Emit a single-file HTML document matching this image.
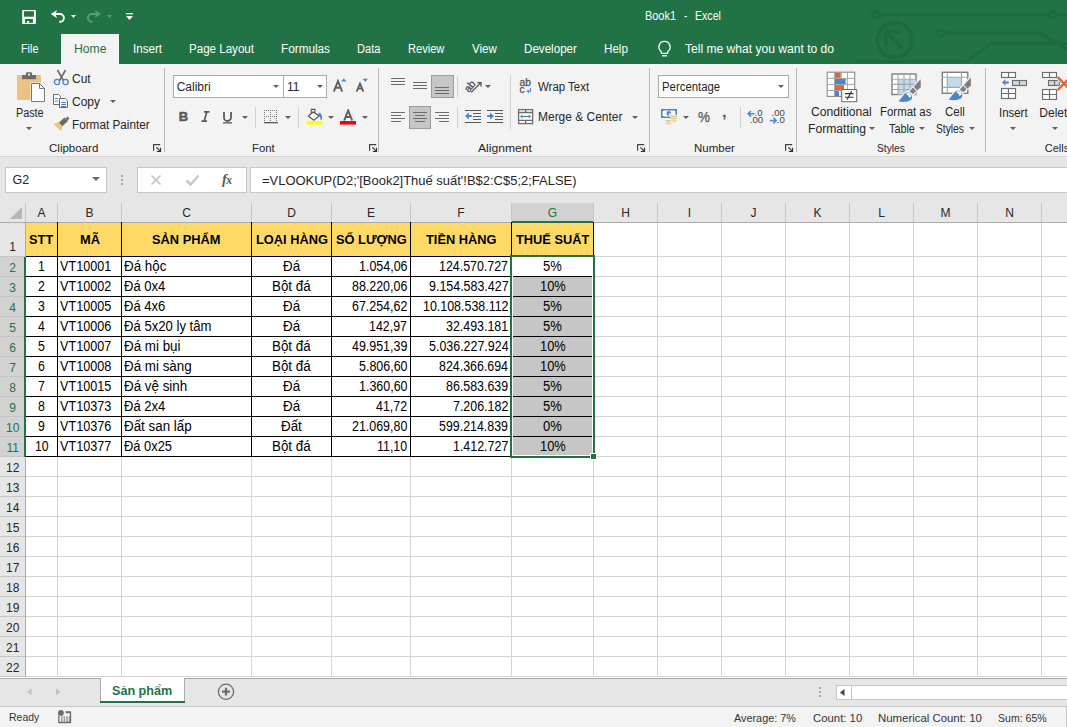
<!DOCTYPE html>
<html><head><meta charset="utf-8"><style>
html,body{margin:0;padding:0;width:1067px;height:727px;overflow:hidden;background:#fff;position:relative;font-family:"Liberation Sans", sans-serif;}
.t{position:absolute;white-space:nowrap;line-height:1;}
</style></head><body>
<div style="position:absolute;left:0px;top:0px;width:1067px;height:64px;background:#217346"></div>
<svg style="position:absolute;left:850px;top:0px;" width="217" height="64" viewBox="0 0 217 64">
<g stroke="#1e6a3f" stroke-width="3.2" fill="none">
<path d="M29 14.6 H199 M206.8 14.6 H217"/>
<circle cx="25.4" cy="14.6" r="3.2" stroke-width="2.6"/>
<circle cx="202.8" cy="14.6" r="3.2" stroke-width="2.6"/>
<circle cx="44.7" cy="40" r="17.4" stroke-width="3.8"/>
<path d="M37.5 33.5 L52 48 M35.6 46.5 V31.5 H51" stroke-width="4.2"/>
<circle cx="90.9" cy="33.2" r="3.2" stroke-width="2.6"/>
<path d="M94.5 33.2 H190.2 L217 48.8"/>
<path d="M5 61.5 H115.9 L141.3 43.3 H217"/>
</g></svg>
<svg style="position:absolute;left:21px;top:9px;" width="16" height="16" viewBox="0 0 16 16"><rect x="1.2" y="0.9" width="13.7" height="14" rx="0.6" fill="#fff"/><rect x="3" y="2.2" width="9.9" height="5.5" fill="#217346"/><rect x="4" y="10" width="7.9" height="3.8" fill="#217346"/><rect x="6" y="12" width="2.1" height="1.8" fill="#fff"/></svg>
<svg style="position:absolute;left:50px;top:9px;" width="17" height="16" viewBox="0 0 17 16"><path d="M0.8 5.1 L7.1 1 L5.4 5.1 L7.1 9.2 Z" fill="#fff"/><path d="M5 5.1 H10 A3.85 3.85 0 0 1 10 12.8 H9.2" fill="none" stroke="#fff" stroke-width="2"/></svg>
<svg style="position:absolute;left:71px;top:15px;" width="5" height="3" viewBox="0 0 5 3"><path d="M0 0 H5 L2.5 3 Z" fill="#fff"/></svg>
<svg style="position:absolute;left:86px;top:9px;" width="17" height="16" viewBox="0 0 17 16"><g transform="translate(15.8,0) scale(-1,1)"><path d="M0.8 5.1 L7.1 1 L5.4 5.1 L7.1 9.2 Z" fill="#5d9a77"/><path d="M5 5.1 H10 A3.85 3.85 0 0 1 10 12.8 H9.2" fill="none" stroke="#5d9a77" stroke-width="2"/></g></svg>
<svg style="position:absolute;left:107px;top:15px;" width="5" height="3" viewBox="0 0 5 3"><path d="M0 0 H5 L2.5 3 Z" fill="#5d9a77"/></svg>
<svg style="position:absolute;left:126px;top:12px;" width="7" height="9" viewBox="0 0 7 9"><rect x="0" y="1" width="7" height="1.3" fill="#fff"/><path d="M0 4 H7 L3.5 8 Z" fill="#fff"/></svg>
<div class="t" style="left:644.60px;top:9.84px;font-size:12px;color:#fff;font-weight:normal;transform-origin:0 0;transform:scaleX(0.9112);">Book1</div>
<div class="t" style="left:683.80px;top:9.84px;font-size:12px;color:#fff;font-weight:normal;transform-origin:0 0;transform:scaleX(0.8258);">-</div>
<div class="t" style="left:694.70px;top:9.84px;font-size:12px;color:#fff;font-weight:normal;transform-origin:0 0;transform:scaleX(0.8828);">Excel</div>
<div style="position:absolute;left:61px;top:34px;width:58px;height:30px;background:#f3f3f3"></div>
<div class="t" style="left:20.70px;top:42.74px;font-size:12px;color:#fff;font-weight:normal;transform-origin:0 0;transform:scaleX(0.9001);">File</div>
<div class="t" style="left:73.60px;top:42.74px;font-size:12px;color:#217346;font-weight:normal;transform-origin:0 0;transform:scaleX(1.0182);">Home</div>
<div class="t" style="left:133.00px;top:42.74px;font-size:12px;color:#fff;font-weight:normal;transform-origin:0 0;transform:scaleX(0.9663);">Insert</div>
<div class="t" style="left:189.00px;top:42.74px;font-size:12px;color:#fff;font-weight:normal;transform-origin:0 0;transform:scaleX(0.9645);">Page Layout</div>
<div class="t" style="left:281.00px;top:42.74px;font-size:12px;color:#fff;font-weight:normal;transform-origin:0 0;transform:scaleX(0.9797);">Formulas</div>
<div class="t" style="left:357.40px;top:42.74px;font-size:12px;color:#fff;font-weight:normal;transform-origin:0 0;transform:scaleX(0.9229);">Data</div>
<div class="t" style="left:408.30px;top:42.74px;font-size:12px;color:#fff;font-weight:normal;transform-origin:0 0;transform:scaleX(0.9217);">Review</div>
<div class="t" style="left:472.10px;top:42.74px;font-size:12px;color:#fff;font-weight:normal;transform-origin:0 0;transform:scaleX(0.9603);">View</div>
<div class="t" style="left:524.10px;top:42.74px;font-size:12px;color:#fff;font-weight:normal;transform-origin:0 0;transform:scaleX(0.9672);">Developer</div>
<div class="t" style="left:604.30px;top:42.74px;font-size:12px;color:#fff;font-weight:normal;transform-origin:0 0;transform:scaleX(0.9682);">Help</div>
<svg style="position:absolute;left:657px;top:40px;" width="15" height="18" viewBox="0 0 15 18"><path d="M7.5 1.3 a5.6 5.6 0 0 0 -3.2 10.2 V13.3 H10.7 V11.5 A5.6 5.6 0 0 0 7.5 1.3 Z" fill="none" stroke="#fff" stroke-width="1.3"/><path d="M5 15.8 H10" stroke="#fff" stroke-width="1.3"/></svg>
<div class="t" style="left:684.90px;top:42.74px;font-size:12px;color:#fff;font-weight:normal;transform-origin:0 0;transform:scaleX(1.0062);">Tell me what you want to do</div>
<div style="position:absolute;left:0px;top:64px;width:1067px;height:92px;background:#f3f3f3"></div>
<div style="position:absolute;left:0px;top:156px;width:1067px;height:1px;background:#d5d5d5"></div>
<div style="position:absolute;left:0px;top:157px;width:1067px;height:46px;background:#e6e6e6"></div>
<div style="position:absolute;left:164px;top:68px;width:1px;height:84px;background:#b8b8b8"></div>
<div style="position:absolute;left:378px;top:68px;width:1px;height:84px;background:#b8b8b8"></div>
<div style="position:absolute;left:649px;top:68px;width:1px;height:84px;background:#b8b8b8"></div>
<div style="position:absolute;left:796px;top:68px;width:1px;height:84px;background:#b8b8b8"></div>
<div style="position:absolute;left:985px;top:68px;width:1px;height:84px;background:#b8b8b8"></div>
<svg style="position:absolute;left:15px;top:71px;" width="32" height="33" viewBox="0 0 32 33">
<rect x="2" y="4" width="24" height="25" rx="1.2" fill="#eac282"/>
<rect x="7" y="4" width="14" height="4.2" fill="#6b6b6b"/>
<rect x="11" y="1.3" width="6" height="3.5" rx="1" fill="#6b6b6b"/>
<circle cx="14" cy="3.6" r="1.1" fill="#f3f3f3"/>
<path d="M15.5 11.5 H25.5 L30.5 16.5 V31.5 H15.5 Z" fill="#f3f3f3"/>
<path d="M16.5 12.5 H24.5 L29.5 17.5 V30.5 H16.5 Z" fill="#fff" stroke="#777" stroke-width="1"/>
<path d="M24.5 12.5 V17.5 H29.5" fill="none" stroke="#777" stroke-width="1"/>
</svg>
<div class="t" style="left:15.60px;top:107.24px;font-size:12px;color:#262626;font-weight:normal;transform-origin:0 0;transform:scaleX(0.8995);">Paste</div>
<svg style="position:absolute;left:25.8px;top:126.80000000000001px;" width="6" height="3.0" viewBox="0 0 6 3.0"><path d="M0 0 H6 L3.0 3.0 Z" fill="#5f5f5f"/></svg>
<svg style="position:absolute;left:53px;top:69px;" width="17" height="17" viewBox="0 0 17 17">
<path d="M4.5 1 L10.5 11.5 M12.5 1 L6.5 11.5" stroke="#6b6b6b" stroke-width="1.6" fill="none"/>
<circle cx="4" cy="13" r="2.6" fill="none" stroke="#4a86c8" stroke-width="1.3"/>
<circle cx="12.6" cy="13" r="2.6" fill="none" stroke="#4a86c8" stroke-width="1.3"/>
</svg>
<div class="t" style="left:72.40px;top:73.14px;font-size:12px;color:#262626;font-weight:normal;transform-origin:0 0;transform:scaleX(0.9961);">Cut</div>
<svg style="position:absolute;left:53px;top:94px;" width="16" height="15" viewBox="0 0 16 15">
<path d="M0.5 0.5 H5.5 L7.5 2.5 V10.5 H0.5 Z" fill="#fff" stroke="#6b6b6b" stroke-width="1"/>
<rect x="2" y="4" width="3" height="1" fill="#4a86c8"/><rect x="2" y="6.5" width="3" height="1" fill="#4a86c8"/>
<path d="M6.5 4.5 H12 L14.5 7 V13.5 H6.5 Z" fill="#fff" stroke="#6b6b6b" stroke-width="1"/>
<rect x="8" y="8" width="5" height="1" fill="#4a86c8"/><rect x="8" y="10" width="5" height="1" fill="#4a86c8"/><rect x="8" y="12" width="5" height="1" fill="#4a86c8"/>
</svg>
<div class="t" style="left:72.40px;top:96.24px;font-size:12px;color:#262626;font-weight:normal;transform-origin:0 0;transform:scaleX(0.9997);">Copy</div>
<svg style="position:absolute;left:109.7px;top:100.0px;" width="6" height="3.0" viewBox="0 0 6 3.0"><path d="M0 0 H6 L3.0 3.0 Z" fill="#5f5f5f"/></svg>
<svg style="position:absolute;left:53px;top:116px;" width="17" height="16" viewBox="0 0 17 16">
<path d="M0.5 8 L6.5 6 L10 9.5 L8 15 Z" fill="#eac282"/>
<path d="M6 6.5 L11.5 1.5 L15 5 L9.5 10 Z" fill="#6b6b6b"/>
<path d="M12.5 2.5 L14.5 0.5 L16.5 2.5 L14.5 4.5 Z" fill="#6b6b6b"/>
</svg>
<div class="t" style="left:72.40px;top:118.84px;font-size:12px;color:#262626;font-weight:normal;transform-origin:0 0;transform:scaleX(0.9779);">Format Painter</div>
<div class="t" style="left:48.70px;top:143.19px;font-size:11px;color:#262626;font-weight:normal;transform-origin:0 0;transform:scaleX(1.0472);">Clipboard</div>
<svg style="position:absolute;left:153px;top:144px;" width="9" height="9" viewBox="0 0 9 9"><path d="M0.6 6.8 V0.6 H7.2" fill="none" stroke="#444" stroke-width="1.2"/><path d="M3.4 3.3 L7.4 7.3 M7.5 3.8 V7.5 H3.8" fill="none" stroke="#333" stroke-width="1.2"/></svg>
<div style="position:absolute;left:173px;top:75px;width:154px;height:23px;background:#fff;border:1px solid #ababab;box-sizing:border-box"></div>
<div style="position:absolute;left:283px;top:76px;width:1px;height:21px;background:#ababab"></div>
<div class="t" style="left:176.70px;top:80.84px;font-size:12px;color:#262626;font-weight:normal;transform-origin:0 0;transform:scaleX(1.0000);">Calibri</div>
<svg style="position:absolute;left:273.4px;top:84.9px;" width="6" height="3.0" viewBox="0 0 6 3.0"><path d="M0 0 H6 L3.0 3.0 Z" fill="#5f5f5f"/></svg>
<div class="t" style="left:287.00px;top:80.84px;font-size:12px;color:#262626;font-weight:normal;transform-origin:0 0;transform:scaleX(1.0000);">11</div>
<svg style="position:absolute;left:316.5px;top:84.9px;" width="6" height="3.0" viewBox="0 0 6 3.0"><path d="M0 0 H6 L3.0 3.0 Z" fill="#5f5f5f"/></svg>
<svg style="position:absolute;left:332px;top:78px;" width="16" height="15" viewBox="0 0 16 15"><path d="M1.8 13.6 L6 3 L10.2 13.6 M3.4 9.8 H8.6" fill="none" stroke="#5f5f5f" stroke-width="1.9"/><path d="M9 3.6 L11.8 0.6 L14.6 3.6 Z" fill="#4a86c8"/></svg>
<svg style="position:absolute;left:355px;top:78px;" width="15" height="15" viewBox="0 0 15 15"><path d="M1.6 13.6 L5 5.6 L8.4 13.6 M2.9 10.6 H7.1" fill="none" stroke="#5f5f5f" stroke-width="1.8"/><path d="M7.6 0.8 H13 L10.3 3.8 Z" fill="#4a86c8"/></svg>
<svg style="position:absolute;left:178px;top:110px;" width="11" height="13" viewBox="0 0 11 13"><text x="0.8" y="11" font-family="Liberation Sans" font-weight="bold" font-size="13" fill="#595959" stroke="#595959" stroke-width="0.5">B</text></svg>
<svg style="position:absolute;left:201px;top:111px;" width="9" height="11" viewBox="0 0 9 11"><path d="M3 0.8 H8.5 M0.5 10.2 H6 M5.8 0.8 L3.2 10.2" stroke="#595959" stroke-width="1.7" fill="none"/></svg>
<svg style="position:absolute;left:222px;top:111px;" width="11" height="13" viewBox="0 0 11 13"><path d="M2 1 V6.5 a3.5 3.5 0 0 0 7 0 V1" fill="none" stroke="#595959" stroke-width="1.8"/><rect x="1" y="11.2" width="9" height="1.3" fill="#595959"/></svg>
<svg style="position:absolute;left:241.5px;top:116.0px;" width="6" height="3.0" viewBox="0 0 6 3.0"><path d="M0 0 H6 L3.0 3.0 Z" fill="#5f5f5f"/></svg>
<div style="position:absolute;left:255px;top:107px;width:1px;height:21px;background:#d2d2d2"></div>
<svg style="position:absolute;left:264px;top:110px;" width="14" height="14" viewBox="0 0 14 14"><g fill="#7a7a7a"><rect x="0" y="0" width="1" height="1"/><rect x="2" y="0" width="1" height="1"/><rect x="4" y="0" width="1" height="1"/><rect x="6" y="0" width="1" height="1"/><rect x="8" y="0" width="1" height="1"/><rect x="10" y="0" width="1" height="1"/><rect x="12" y="0" width="1" height="1"/><rect x="0" y="6" width="1" height="1"/><rect x="2" y="6" width="1" height="1"/><rect x="4" y="6" width="1" height="1"/><rect x="6" y="6" width="1" height="1"/><rect x="8" y="6" width="1" height="1"/><rect x="10" y="6" width="1" height="1"/><rect x="12" y="6" width="1" height="1"/><rect x="0" y="0" width="1" height="1"/><rect x="0" y="2" width="1" height="1"/><rect x="0" y="4" width="1" height="1"/><rect x="0" y="6" width="1" height="1"/><rect x="0" y="8" width="1" height="1"/><rect x="0" y="10" width="1" height="1"/><rect x="6" y="0" width="1" height="1"/><rect x="6" y="2" width="1" height="1"/><rect x="6" y="4" width="1" height="1"/><rect x="6" y="6" width="1" height="1"/><rect x="6" y="8" width="1" height="1"/><rect x="6" y="10" width="1" height="1"/><rect x="12" y="0" width="1" height="1"/><rect x="12" y="2" width="1" height="1"/><rect x="12" y="4" width="1" height="1"/><rect x="12" y="6" width="1" height="1"/><rect x="12" y="8" width="1" height="1"/><rect x="12" y="10" width="1" height="1"/></g><rect x="0" y="12" width="14" height="1.3" fill="#595959"/></svg>
<svg style="position:absolute;left:284.5px;top:116.0px;" width="6" height="3.0" viewBox="0 0 6 3.0"><path d="M0 0 H6 L3.0 3.0 Z" fill="#5f5f5f"/></svg>
<div style="position:absolute;left:298px;top:107px;width:1px;height:21px;background:#d2d2d2"></div>
<svg style="position:absolute;left:306px;top:108px;" width="18" height="17" viewBox="0 0 18 17"><path d="M5.2 6.4 V1.4 H8.9 V5.4" fill="none" stroke="#555" stroke-width="1.1"/><path d="M2.4 8.3 L6.9 4.1 L13.4 7.9 L7.9 12.3 Z" fill="#fff" stroke="#555" stroke-width="1.2" stroke-linejoin="miter"/><path d="M12.8 4.6 Q16.8 5.6 15.8 11.6 L14.3 11.4 Q14.8 8.2 12.2 7.2 Z" fill="#4a86c8"/><rect x="0.5" y="13" width="16" height="3.6" fill="#ffff00"/></svg>
<svg style="position:absolute;left:327.5px;top:116.0px;" width="6" height="3.0" viewBox="0 0 6 3.0"><path d="M0 0 H6 L3.0 3.0 Z" fill="#5f5f5f"/></svg>
<svg style="position:absolute;left:340px;top:109px;" width="17" height="16" viewBox="0 0 17 16"><path d="M4.2 11.5 L8.2 1.5 L12.2 11.5 M5.6 8 H10.8" fill="none" stroke="#5f5f5f" stroke-width="2"/><rect x="0" y="12" width="16" height="3.6" fill="#ff0000"/></svg>
<svg style="position:absolute;left:361.8px;top:115.8px;" width="6" height="3.0" viewBox="0 0 6 3.0"><path d="M0 0 H6 L3.0 3.0 Z" fill="#5f5f5f"/></svg>
<div class="t" style="left:251.80px;top:143.19px;font-size:11px;color:#262626;font-weight:normal;transform-origin:0 0;transform:scaleX(1.0313);">Font</div>
<svg style="position:absolute;left:369px;top:144px;" width="9" height="9" viewBox="0 0 9 9"><path d="M0.6 6.8 V0.6 H7.2" fill="none" stroke="#444" stroke-width="1.2"/><path d="M3.4 3.3 L7.4 7.3 M7.5 3.8 V7.5 H3.8" fill="none" stroke="#333" stroke-width="1.2"/></svg>
<div style="position:absolute;left:391px;top:78px;width:14px;height:1px;background:#6b6b6b"></div>
<div style="position:absolute;left:391px;top:81px;width:14px;height:1px;background:#6b6b6b"></div>
<div style="position:absolute;left:391px;top:84px;width:14px;height:1px;background:#6b6b6b"></div>
<div style="position:absolute;left:413px;top:82px;width:14px;height:1px;background:#6b6b6b"></div>
<div style="position:absolute;left:413px;top:85px;width:14px;height:1px;background:#6b6b6b"></div>
<div style="position:absolute;left:413px;top:88px;width:14px;height:1px;background:#6b6b6b"></div>
<div style="position:absolute;left:431px;top:75px;width:23px;height:23px;background:#c6c6c6;border:1px solid #9c9c9c;box-sizing:border-box"></div>
<div style="position:absolute;left:435px;top:87px;width:14px;height:1px;background:#6b6b6b"></div>
<div style="position:absolute;left:435px;top:90px;width:14px;height:1px;background:#6b6b6b"></div>
<div style="position:absolute;left:435px;top:93px;width:14px;height:1px;background:#6b6b6b"></div>
<div style="position:absolute;left:457px;top:76px;width:1px;height:21px;background:#d2d2d2"></div>
<svg style="position:absolute;left:463px;top:76px;" width="20" height="18" viewBox="0 0 20 18"><text x="2" y="15" font-family="Liberation Sans" font-size="10.5" fill="#555" stroke="#555" stroke-width="0.35" transform="rotate(-52 6 12)">ab</text><path d="M8.2 16.4 L17.8 6.8" stroke="#555" stroke-width="1.3"/><path d="M14.2 6.6 H18 V10.4" fill="none" stroke="#555" stroke-width="1.3"/></svg>
<svg style="position:absolute;left:484.5px;top:84.5px;" width="6" height="3.0" viewBox="0 0 6 3.0"><path d="M0 0 H6 L3.0 3.0 Z" fill="#5f5f5f"/></svg>
<div style="position:absolute;left:391px;top:112px;width:14px;height:1px;background:#6b6b6b"></div>
<div style="position:absolute;left:391px;top:115px;width:10px;height:1px;background:#6b6b6b"></div>
<div style="position:absolute;left:391px;top:118px;width:14px;height:1px;background:#6b6b6b"></div>
<div style="position:absolute;left:391px;top:121px;width:10px;height:1px;background:#6b6b6b"></div>
<div style="position:absolute;left:409px;top:106px;width:22px;height:23px;background:#c6c6c6;border:1px solid #9c9c9c;box-sizing:border-box"></div>
<div style="position:absolute;left:413.0px;top:112px;width:14px;height:1px;background:#6b6b6b"></div>
<div style="position:absolute;left:415.0px;top:115px;width:10px;height:1px;background:#6b6b6b"></div>
<div style="position:absolute;left:413.0px;top:118px;width:14px;height:1px;background:#6b6b6b"></div>
<div style="position:absolute;left:415.0px;top:121px;width:10px;height:1px;background:#6b6b6b"></div>
<div style="position:absolute;left:435px;top:112px;width:14px;height:1px;background:#6b6b6b"></div>
<div style="position:absolute;left:439px;top:115px;width:10px;height:1px;background:#6b6b6b"></div>
<div style="position:absolute;left:435px;top:118px;width:14px;height:1px;background:#6b6b6b"></div>
<div style="position:absolute;left:439px;top:121px;width:10px;height:1px;background:#6b6b6b"></div>
<div style="position:absolute;left:457px;top:107px;width:1px;height:21px;background:#d2d2d2"></div>
<svg style="position:absolute;left:465px;top:110px;" width="16" height="13" viewBox="0 0 16 13"><g fill="#595959"><rect x="0" y="0" width="16" height="1"/><rect x="8" y="3" width="8" height="1"/><rect x="8" y="6" width="8" height="1"/><rect x="8" y="9" width="8" height="1"/><rect x="0" y="12" width="16" height="1"/></g><path d="M0 6 L3.9 2.6 V5 H6.8 V7 H3.9 V9.4 Z" fill="#4a86c8"/></svg>
<svg style="position:absolute;left:487px;top:110px;" width="16" height="13" viewBox="0 0 16 13"><g fill="#595959"><rect x="0" y="0" width="16" height="1"/><rect x="8" y="3" width="8" height="1"/><rect x="8" y="6" width="8" height="1"/><rect x="8" y="9" width="8" height="1"/><rect x="0" y="12" width="16" height="1"/></g><path d="M7 6 L3.1 2.6 V5 H0.2 V7 H3.1 V9.4 Z" fill="#4a86c8"/></svg>
<div style="position:absolute;left:510px;top:75px;width:1px;height:54px;background:#d2d2d2"></div>
<svg style="position:absolute;left:519px;top:78px;" width="15" height="16" viewBox="0 0 15 16"><text x="0.6" y="8" font-family="Liberation Sans" font-size="10" fill="#555" stroke="#555" stroke-width="0.3" textLength="11.5" lengthAdjust="spacingAndGlyphs">ab</text><text x="0.6" y="14.6" font-family="Liberation Sans" font-size="10" fill="#555" stroke="#555" stroke-width="0.3">c</text><path d="M11.5 10 V13.2 H8.6" fill="none" stroke="#4a86c8" stroke-width="1.1"/><path d="M10 11.8 L8.3 13.2 L10 14.6" fill="none" stroke="#4a86c8" stroke-width="1.1"/></svg>
<div class="t" style="left:537.50px;top:80.84px;font-size:12px;color:#262626;font-weight:normal;transform-origin:0 0;transform:scaleX(0.9537);">Wrap Text</div>
<svg style="position:absolute;left:517px;top:108px;" width="17" height="17" viewBox="0 0 17 17"><rect x="1.6" y="1.6" width="14" height="14" fill="#fff" stroke="#6b6b6b" stroke-width="1.3"/><path d="M1.6 4.5 H15.6 M1.6 12.4 H15.6 M8.6 1.6 V4.5 M8.6 12.4 V15.6" stroke="#6b6b6b" stroke-width="1.3"/><path d="M4.6 8.5 H12.6" stroke="#4a86c8" stroke-width="1.3"/><path d="M3 8.5 L5.4 6.6 V10.4 Z M14.2 8.5 L11.8 6.6 V10.4 Z" fill="#4a86c8"/></svg>
<div class="t" style="left:537.50px;top:111.44px;font-size:12px;color:#262626;font-weight:normal;transform-origin:0 0;transform:scaleX(0.9975);">Merge &amp; Center</div>
<svg style="position:absolute;left:631.5px;top:116.3px;" width="6" height="3.0" viewBox="0 0 6 3.0"><path d="M0 0 H6 L3.0 3.0 Z" fill="#5f5f5f"/></svg>
<div class="t" style="left:478.30px;top:143.19px;font-size:11px;color:#262626;font-weight:normal;transform-origin:0 0;transform:scaleX(1.1039);">Alignment</div>
<svg style="position:absolute;left:637px;top:144px;" width="9" height="9" viewBox="0 0 9 9"><path d="M0.6 6.8 V0.6 H7.2" fill="none" stroke="#444" stroke-width="1.2"/><path d="M3.4 3.3 L7.4 7.3 M7.5 3.8 V7.5 H3.8" fill="none" stroke="#333" stroke-width="1.2"/></svg>
<div style="position:absolute;left:658px;top:75px;width:131px;height:23px;background:#fff;border:1px solid #ababab;box-sizing:border-box"></div>
<div class="t" style="left:661.60px;top:80.84px;font-size:12px;color:#262626;font-weight:normal;transform-origin:0 0;transform:scaleX(0.9482);">Percentage</div>
<svg style="position:absolute;left:778.0px;top:84.9px;" width="6" height="3.0" viewBox="0 0 6 3.0"><path d="M0 0 H6 L3.0 3.0 Z" fill="#5f5f5f"/></svg>
<svg style="position:absolute;left:660px;top:108px;" width="19" height="18" viewBox="0 0 19 18"><rect x="1" y="1" width="16" height="9" fill="#4a86c8"/><path d="M3.6 2.6 H14.4 L15.4 3.6 V7.4 L14.4 8.4 H3.6 L2.6 7.4 V3.6 Z" fill="#fff"/><circle cx="8.8" cy="5.4" r="2.3" fill="#4a86c8"/><path d="M8.8 5.4 L11.2 5.4 A2.4 2.4 0 0 1 8.8 7.8 Z" fill="#fff"/><g fill="#eac282" stroke="#f3f3f3" stroke-width="0.9"><ellipse cx="13.6" cy="12.8" rx="3.6" ry="1.4"/><ellipse cx="13.6" cy="10.6" rx="3.6" ry="1.4"/><ellipse cx="13.6" cy="8.4" rx="3.6" ry="1.4"/><ellipse cx="8.4" cy="15" rx="3.6" ry="1.4"/><ellipse cx="8.4" cy="12.8" rx="3.6" ry="1.4"/></g></svg>
<svg style="position:absolute;left:682.6px;top:115.8px;" width="6" height="3.0" viewBox="0 0 6 3.0"><path d="M0 0 H6 L3.0 3.0 Z" fill="#5f5f5f"/></svg>
<div class="t" style="left:697.60px;top:110.43px;font-size:14.5px;color:#555;font-weight:normal;transform-origin:0 0;transform:scaleX(0.9309);-webkit-text-stroke:0.25px #555">%</div>
<div class="t" style="left:722.20px;top:103.50px;font-size:15px;color:#595959;font-weight:bold;transform-origin:0 0;transform:scaleX(1.1031);">,</div>
<div style="position:absolute;left:740px;top:107px;width:1px;height:21px;background:#d2d2d2"></div>
<svg style="position:absolute;left:747px;top:108px;" width="18" height="16" viewBox="0 0 18 16"><path d="M1.4 5.8 H7.6" stroke="#4a86c8" stroke-width="1.5"/><path d="M4 3 L1.2 5.8 L4 8.6" fill="none" stroke="#4a86c8" stroke-width="1.5"/><text x="7.6" y="8.2" font-family="Liberation Sans" font-size="9.6" fill="#444">.0</text><text x="2.8" y="15" font-family="Liberation Sans" font-size="9.6" fill="#444">.00</text></svg>
<svg style="position:absolute;left:769px;top:108px;" width="18" height="16" viewBox="0 0 18 16"><text x="2.6" y="8.2" font-family="Liberation Sans" font-size="9.6" fill="#444">.00</text><path d="M0.8 12.6 H7" stroke="#4a86c8" stroke-width="1.5"/><path d="M4.4 9.8 L7.2 12.6 L4.4 15.4" fill="none" stroke="#4a86c8" stroke-width="1.5"/><text x="7.8" y="15" font-family="Liberation Sans" font-size="9.6" fill="#444">.0</text></svg>
<div class="t" style="left:694.40px;top:143.19px;font-size:11px;color:#262626;font-weight:normal;transform-origin:0 0;transform:scaleX(1.0453);">Number</div>
<svg style="position:absolute;left:785px;top:144px;" width="9" height="9" viewBox="0 0 9 9"><path d="M0.6 6.8 V0.6 H7.2" fill="none" stroke="#444" stroke-width="1.2"/><path d="M3.4 3.3 L7.4 7.3 M7.5 3.8 V7.5 H3.8" fill="none" stroke="#333" stroke-width="1.2"/></svg>
<svg style="position:absolute;left:826px;top:71px;" width="32" height="32" viewBox="0 0 32 32">
<rect x="1.2" y="1.2" width="27.5" height="24.2" fill="#fff" stroke="#8a8a8a" stroke-width="1.1"/>
<path d="M1.2 7.4 H28.7 M1.2 13.6 H28.7 M1.2 19.5 H28.7 M8.5 1.2 V25.4 M15.2 1.2 V25.4 M21.4 1.2 V25.4" stroke="#a6a6a6" stroke-width="1"/>
<rect x="9" y="1.7" width="5.7" height="5.2" fill="#e0653a"/>
<rect x="9" y="7.9" width="10.7" height="5.2" fill="#4a86c8"/>
<rect x="9" y="14.1" width="9" height="4.9" fill="#e0653a"/>
<rect x="9" y="20" width="4" height="5" fill="#4a86c8"/>
<rect x="15.7" y="18.5" width="15" height="12.2" fill="#fff" stroke="#6b6b6b" stroke-width="1"/>
<path d="M19 22.6 H27.5 M19 26.2 H27.5 M25.6 20.2 L21 28.8" stroke="#333" stroke-width="1.1"/>
</svg>
<div class="t" style="left:810.70px;top:106.24px;font-size:12px;color:#262626;font-weight:normal;transform-origin:0 0;transform:scaleX(1.0127);">Conditional</div>
<div class="t" style="left:807.50px;top:122.54px;font-size:12px;color:#262626;font-weight:normal;transform-origin:0 0;transform:scaleX(1.0131);">Formatting</div>
<svg style="position:absolute;left:869.0px;top:127.19999999999999px;" width="6" height="3.0" viewBox="0 0 6 3.0"><path d="M0 0 H6 L3.0 3.0 Z" fill="#5f5f5f"/></svg>
<svg style="position:absolute;left:891px;top:73px;" width="32" height="30" viewBox="0 0 32 30">
<rect x="1" y="1" width="24" height="20.5" fill="#fff" stroke="#7f7f7f" stroke-width="1.4"/>
<rect x="7" y="6.5" width="18" height="15" fill="#c5d9ee"/>
<path d="M1 6.3 H25 M1 11.4 H25 M1 16.5 H25 M7 1 V21.5 M13 1 V21.5 M19 1 V21.5" stroke="#a6a6a6" stroke-width="1.1"/>
<g stroke="#f3f3f3" stroke-width="2.4" stroke-linejoin="round" fill="#f3f3f3">
<path d="M29.6 6.2 L29.8 14.2 L21.9 21 L18.6 18.2 Z"/>
<path d="M7.5 28.6 L13.4 21 A4.4 4.4 0 1 1 20 27 Q17 29 12.5 29 Z"/>
</g>
<path d="M29.6 6.2 L29.8 14.2 L21.9 21 L18.6 18.2 Z" fill="#7f7f7f"/>
<path d="M7.5 28.6 L13.4 21 A4.4 4.4 0 1 1 20 27 Q17 29 12.5 29 Z" fill="#4a86c8"/>
<path d="M22.4 14.2 L25.6 17.6" stroke="#f3f3f3" stroke-width="1.1"/>
<path d="M15.6 20.2 Q19.8 19.4 20.4 23.4 L18.4 24.8 Q17.8 22 15.4 21.4 Z" fill="#fff"/>
</svg>
<div class="t" style="left:879.60px;top:106.24px;font-size:12px;color:#262626;font-weight:normal;transform-origin:0 0;transform:scaleX(0.9516);">Format as</div>
<div class="t" style="left:888.90px;top:122.54px;font-size:12px;color:#262626;font-weight:normal;transform-origin:0 0;transform:scaleX(0.8992);">Table</div>
<svg style="position:absolute;left:919.0px;top:127.19999999999999px;" width="6" height="3.0" viewBox="0 0 6 3.0"><path d="M0 0 H6 L3.0 3.0 Z" fill="#5f5f5f"/></svg>
<svg style="position:absolute;left:941px;top:71px;" width="32" height="30" viewBox="0 0 32 30">
<rect x="1.3" y="1.3" width="25.5" height="21" fill="#fff" stroke="#7f7f7f" stroke-width="1.4"/>
<rect x="6.3" y="6.2" width="14.2" height="10.2" fill="#c5d9ee"/>
<path d="M1.3 6.2 H26.8 M1.3 16.4 H26.8 M6.3 1.3 V22.3 M20.5 1.3 V22.3" stroke="#a6a6a6" stroke-width="1.1"/>
<g transform="translate(0.2,0.2)"><g stroke="#f3f3f3" stroke-width="2.4" stroke-linejoin="round" fill="#f3f3f3">
<path d="M29.6 6.2 L29.8 14.2 L21.9 21 L18.6 18.2 Z"/>
<path d="M7.5 28.6 L13.4 21 A4.4 4.4 0 1 1 20 27 Q17 29 12.5 29 Z"/>
</g>
<path d="M29.6 6.2 L29.8 14.2 L21.9 21 L18.6 18.2 Z" fill="#7f7f7f"/>
<path d="M7.5 28.6 L13.4 21 A4.4 4.4 0 1 1 20 27 Q17 29 12.5 29 Z" fill="#4a86c8"/>
<path d="M22.4 14.2 L25.6 17.6" stroke="#f3f3f3" stroke-width="1.1"/>
<path d="M15.6 20.2 Q19.8 19.4 20.4 23.4 L18.4 24.8 Q17.8 22 15.4 21.4 Z" fill="#fff"/></g>
</svg>
<div class="t" style="left:945.20px;top:106.24px;font-size:12px;color:#262626;font-weight:normal;transform-origin:0 0;transform:scaleX(0.9576);">Cell</div>
<div class="t" style="left:936.40px;top:122.54px;font-size:12px;color:#262626;font-weight:normal;transform-origin:0 0;transform:scaleX(0.8538);">Styles</div>
<svg style="position:absolute;left:969.0px;top:127.19999999999999px;" width="6" height="3.0" viewBox="0 0 6 3.0"><path d="M0 0 H6 L3.0 3.0 Z" fill="#5f5f5f"/></svg>
<div class="t" style="left:876.50px;top:143.19px;font-size:11px;color:#262626;font-weight:normal;transform-origin:0 0;transform:scaleX(0.9315);">Styles</div>
<svg style="position:absolute;left:1000px;top:71px;" width="28" height="29" viewBox="0 0 28 29">
<g fill="#fff" stroke="#6e6e6e" stroke-width="1.15">
<rect x="1.5" y="1.5" width="14" height="5"/>
<rect x="1.5" y="17.5" width="14" height="10"/>
</g>
<rect x="12.5" y="9.5" width="14" height="5" fill="#c5d9ee" stroke="#6e6e6e" stroke-width="1.15"/>
<path d="M8.5 1.5 V6.5 M19.5 9.5 V14.5 M8.5 17.5 V27.5 M1.5 22.5 H15.5" stroke="#6e6e6e" stroke-width="1.15"/>
<path d="M2.1 11.5 L5.4 8.3 V10.5 H8.8 V12.5 H5.4 V14.7 Z" fill="#4a86c8"/>
</svg>
<div class="t" style="left:999.20px;top:106.54px;font-size:12px;color:#262626;font-weight:normal;transform-origin:0 0;transform:scaleX(0.9530);">Insert</div>
<svg style="position:absolute;left:1010.3px;top:126.9px;" width="6" height="3.0" viewBox="0 0 6 3.0"><path d="M0 0 H6 L3.0 3.0 Z" fill="#5f5f5f"/></svg>
<svg style="position:absolute;left:1041px;top:71px;" width="26" height="29" viewBox="0 0 26 29">
<g fill="#fff" stroke="#6e6e6e" stroke-width="1.15">
<rect x="1.5" y="1.5" width="14" height="5"/>
<rect x="1.5" y="18.5" width="14" height="10"/>
</g>
<rect x="7.5" y="9.5" width="11" height="5" fill="#c5d9ee" stroke="#6e6e6e" stroke-width="1.15"/>
<path d="M8.5 1.5 V6.5 M13.5 9.5 V14.5 M8.5 18.5 V28.5 M1.5 23.5 H15.5" stroke="#6e6e6e" stroke-width="1.15"/>
<path d="M16.6 6.2 L29.6 19.2 M16.6 19.2 L29.6 6.2" stroke="#f3f3f3" stroke-width="4.2"/>
<path d="M16.6 6.2 L29.6 19.2 M16.6 19.2 L29.6 6.2" stroke="#e0653a" stroke-width="2.5"/>
</svg>
<div class="t" style="left:1039.30px;top:106.54px;font-size:12px;color:#262626;font-weight:normal;transform-origin:0 0;transform:scaleX(1.0000);">Delete</div>
<svg style="position:absolute;left:1051.9px;top:126.9px;" width="6" height="3.0" viewBox="0 0 6 3.0"><path d="M0 0 H6 L3.0 3.0 Z" fill="#5f5f5f"/></svg>
<div class="t" style="left:1044.80px;top:143.19px;font-size:11px;color:#262626;font-weight:normal;transform-origin:0 0;transform:scaleX(1.0000);">Cells</div>
<div style="position:absolute;left:5px;top:167px;width:102px;height:26px;background:#fff;border:1px solid #c6c6c6;box-sizing:border-box"></div>
<div class="t" style="left:12.50px;top:174.42px;font-size:12.5px;color:#262626;font-weight:normal;transform-origin:0 0;transform:scaleX(1.0000);">G2</div>
<svg style="position:absolute;left:92.2px;top:176.7px;" width="8" height="4.0" viewBox="0 0 8 4.0"><path d="M0 0 H8 L4.0 4.0 Z" fill="#6b6b6b"/></svg>
<div style="position:absolute;left:121px;top:175px;width:2px;height:2px;background:#a6a6a6"></div>
<div style="position:absolute;left:121px;top:179px;width:2px;height:2px;background:#a6a6a6"></div>
<div style="position:absolute;left:121px;top:183px;width:2px;height:2px;background:#a6a6a6"></div>
<div style="position:absolute;left:137px;top:167px;width:110px;height:26px;background:#fff;border:1px solid #c6c6c6;box-sizing:border-box"></div>
<svg style="position:absolute;left:150px;top:174px;" width="12" height="12" viewBox="0 0 12 12"><path d="M1.5 1.5 L10.5 10.5 M10.5 1.5 L1.5 10.5" stroke="#c4c4c4" stroke-width="1.7"/></svg>
<svg style="position:absolute;left:185px;top:174px;" width="15" height="12" viewBox="0 0 15 12"><path d="M1.5 6.5 L5.5 10.5 L13.5 1.5" fill="none" stroke="#c8c8c8" stroke-width="2.6"/></svg>
<div class="t" style="left:222px;top:172px;font-family:Liberation Serif,serif;font-style:italic;font-weight:bold;font-size:14.5px;color:#595959">f<span style="font-size:11.5px;position:relative;left:-0.5px">x</span></div>
<div style="position:absolute;left:250px;top:167px;width:830px;height:26px;background:#fff;border:1px solid #c6c6c6;box-sizing:border-box"></div>
<div class="t" style="left:262.00px;top:174.00px;font-size:13px;color:#262626;font-weight:normal;transform-origin:0 0;transform:scaleX(0.9974);">=VLOOKUP(D2;'[Book2]Thuế suất'!B$2:C$5;2;FALSE)</div>
<div style="position:absolute;left:0px;top:677px;width:1067px;height:1px;background:#fff"></div>
<div style="position:absolute;left:0px;top:678px;width:1067px;height:28px;background:#e6e6e6"></div>
<div style="position:absolute;left:0px;top:678px;width:1067px;height:1px;background:#ababab"></div>
<div style="position:absolute;left:0px;top:706px;width:1067px;height:21px;background:#f3f3f3"></div>
<div style="position:absolute;left:0px;top:706px;width:1067px;height:1px;background:#c6c6c6"></div>
<svg style="position:absolute;left:27px;top:688px;" width="5" height="8" viewBox="0 0 5 8"><path d="M4.5 0 V7.5 L0 3.75 Z" fill="#c4c4c4"/></svg>
<svg style="position:absolute;left:56px;top:688px;" width="5" height="8" viewBox="0 0 5 8"><path d="M0 0 V7.5 L4.5 3.75 Z" fill="#c4c4c4"/></svg>
<div style="position:absolute;left:100px;top:678px;width:85px;height:25px;background:#fff;border-left:1px solid #ababab;border-right:1px solid #ababab;box-sizing:border-box"></div>
<div style="position:absolute;left:100px;top:701px;width:85px;height:2px;background:#217346"></div>
<div class="t" style="left:112.20px;top:685.12px;font-size:12.5px;color:#217346;font-weight:bold;transform-origin:0 0;transform:scaleX(1.0077);">Sản phẩm</div>
<svg style="position:absolute;left:217px;top:683px;" width="18" height="18" viewBox="0 0 18 18"><circle cx="9" cy="8.7" r="7.6" fill="none" stroke="#6b6b6b" stroke-width="1.2"/><path d="M9 4.8 V12.6 M5.1 8.7 H12.9" stroke="#6b6b6b" stroke-width="2.2"/></svg>
<div style="position:absolute;left:819px;top:687px;width:2px;height:2px;background:#a6a6a6"></div>
<div style="position:absolute;left:819px;top:691px;width:2px;height:2px;background:#a6a6a6"></div>
<div style="position:absolute;left:819px;top:695px;width:2px;height:2px;background:#a6a6a6"></div>
<div style="position:absolute;left:836px;top:685px;width:240px;height:15px;background:#fff;border:1px solid #c6c6c6;box-sizing:border-box"></div>
<div style="position:absolute;left:851px;top:685px;width:1px;height:15px;background:#c6c6c6"></div>
<svg style="position:absolute;left:840px;top:689px;" width="5" height="7" viewBox="0 0 5 7"><path d="M4.5 0 V7 L0 3.5 Z" fill="#444"/></svg>
<div style="position:absolute;left:1066px;top:707px;width:1px;height:20px;background:#c6c6c6"></div>
<div class="t" style="left:8.60px;top:712.11px;font-size:10.5px;color:#333;font-weight:normal;transform-origin:0 0;transform:scaleX(0.9982);">Ready</div>
<svg style="position:absolute;left:57px;top:709px;" width="16" height="16" viewBox="0 0 16 16"><circle cx="3.9" cy="3.9" r="2.9" fill="#6b6b6b"/><rect x="8.6" y="2.2" width="5.4" height="2" fill="#6b6b6b"/><path d="M1.8 6.6 V13.5 H13.5 V4" fill="none" stroke="#6b6b6b" stroke-width="1.3"/><g fill="#6b6b6b"><rect x="4" y="7.6" width="1.6" height="1.1"/><rect x="6.6" y="7.6" width="1.6" height="1.1"/><rect x="9.2" y="7.6" width="1.6" height="1.1"/><rect x="11.6" y="7.6" width="1.6" height="1.1"/><rect x="4" y="9.5" width="1.6" height="1.1"/><rect x="6.6" y="9.5" width="1.6" height="1.1"/><rect x="9.2" y="9.5" width="1.6" height="1.1"/><rect x="11.6" y="9.5" width="1.6" height="1.1"/><rect x="4" y="11.4" width="1.6" height="1.1"/><rect x="6.6" y="11.4" width="1.6" height="1.1"/><rect x="9.2" y="11.4" width="1.6" height="1.1"/><rect x="11.6" y="11.4" width="1.6" height="1.1"/></g></svg>
<div class="t" style="left:733.70px;top:712.99px;font-size:11px;color:#333;font-weight:normal;transform-origin:0 0;transform:scaleX(0.9859);">Average: 7%</div>
<div class="t" style="left:812.50px;top:712.99px;font-size:11px;color:#333;font-weight:normal;transform-origin:0 0;transform:scaleX(1.0315);">Count: 10</div>
<div class="t" style="left:878.20px;top:712.99px;font-size:11px;color:#333;font-weight:normal;transform-origin:0 0;transform:scaleX(1.0353);">Numerical Count: 10</div>
<div class="t" style="left:998.20px;top:712.99px;font-size:11px;color:#333;font-weight:normal;transform-origin:0 0;transform:scaleX(0.9578);">Sum: 65%</div>
<div style="position:absolute;left:0px;top:203px;width:1067px;height:19px;background:#e6e6e6"></div>
<div style="position:absolute;left:0px;top:223px;width:25px;height:454px;background:#e6e6e6"></div>
<div style="position:absolute;left:0px;top:257px;width:24px;height:199px;background:#d2d2d2"></div>
<div style="position:absolute;left:512px;top:203px;width:81px;height:19px;background:#d2d2d2"></div>
<div style="position:absolute;left:57px;top:223px;width:1px;height:454px;background:#d4d4d4"></div>
<div style="position:absolute;left:121px;top:223px;width:1px;height:454px;background:#d4d4d4"></div>
<div style="position:absolute;left:251px;top:223px;width:1px;height:454px;background:#d4d4d4"></div>
<div style="position:absolute;left:331px;top:223px;width:1px;height:454px;background:#d4d4d4"></div>
<div style="position:absolute;left:410px;top:223px;width:1px;height:454px;background:#d4d4d4"></div>
<div style="position:absolute;left:511px;top:223px;width:1px;height:454px;background:#d4d4d4"></div>
<div style="position:absolute;left:593px;top:223px;width:1px;height:454px;background:#d4d4d4"></div>
<div style="position:absolute;left:657px;top:223px;width:1px;height:454px;background:#d4d4d4"></div>
<div style="position:absolute;left:721px;top:223px;width:1px;height:454px;background:#d4d4d4"></div>
<div style="position:absolute;left:785px;top:223px;width:1px;height:454px;background:#d4d4d4"></div>
<div style="position:absolute;left:849px;top:223px;width:1px;height:454px;background:#d4d4d4"></div>
<div style="position:absolute;left:913px;top:223px;width:1px;height:454px;background:#d4d4d4"></div>
<div style="position:absolute;left:977px;top:223px;width:1px;height:454px;background:#d4d4d4"></div>
<div style="position:absolute;left:1041px;top:223px;width:1px;height:454px;background:#d4d4d4"></div>
<div style="position:absolute;left:26px;top:256px;width:1041px;height:1px;background:#d4d4d4"></div>
<div style="position:absolute;left:26px;top:276px;width:1041px;height:1px;background:#d4d4d4"></div>
<div style="position:absolute;left:26px;top:296px;width:1041px;height:1px;background:#d4d4d4"></div>
<div style="position:absolute;left:26px;top:316px;width:1041px;height:1px;background:#d4d4d4"></div>
<div style="position:absolute;left:26px;top:336px;width:1041px;height:1px;background:#d4d4d4"></div>
<div style="position:absolute;left:26px;top:356px;width:1041px;height:1px;background:#d4d4d4"></div>
<div style="position:absolute;left:26px;top:376px;width:1041px;height:1px;background:#d4d4d4"></div>
<div style="position:absolute;left:26px;top:396px;width:1041px;height:1px;background:#d4d4d4"></div>
<div style="position:absolute;left:26px;top:416px;width:1041px;height:1px;background:#d4d4d4"></div>
<div style="position:absolute;left:26px;top:436px;width:1041px;height:1px;background:#d4d4d4"></div>
<div style="position:absolute;left:26px;top:456px;width:1041px;height:1px;background:#d4d4d4"></div>
<div style="position:absolute;left:26px;top:476px;width:1041px;height:1px;background:#d4d4d4"></div>
<div style="position:absolute;left:26px;top:496px;width:1041px;height:1px;background:#d4d4d4"></div>
<div style="position:absolute;left:26px;top:516px;width:1041px;height:1px;background:#d4d4d4"></div>
<div style="position:absolute;left:26px;top:536px;width:1041px;height:1px;background:#d4d4d4"></div>
<div style="position:absolute;left:26px;top:556px;width:1041px;height:1px;background:#d4d4d4"></div>
<div style="position:absolute;left:26px;top:576px;width:1041px;height:1px;background:#d4d4d4"></div>
<div style="position:absolute;left:26px;top:596px;width:1041px;height:1px;background:#d4d4d4"></div>
<div style="position:absolute;left:26px;top:616px;width:1041px;height:1px;background:#d4d4d4"></div>
<div style="position:absolute;left:26px;top:636px;width:1041px;height:1px;background:#d4d4d4"></div>
<div style="position:absolute;left:26px;top:656px;width:1041px;height:1px;background:#d4d4d4"></div>
<div style="position:absolute;left:26px;top:676px;width:1041px;height:1px;background:#d4d4d4"></div>
<div style="position:absolute;left:25px;top:203px;width:1px;height:19px;background:#c6c6c6"></div>
<div style="position:absolute;left:57px;top:203px;width:1px;height:19px;background:#c6c6c6"></div>
<div style="position:absolute;left:121px;top:203px;width:1px;height:19px;background:#c6c6c6"></div>
<div style="position:absolute;left:251px;top:203px;width:1px;height:19px;background:#c6c6c6"></div>
<div style="position:absolute;left:331px;top:203px;width:1px;height:19px;background:#c6c6c6"></div>
<div style="position:absolute;left:410px;top:203px;width:1px;height:19px;background:#c6c6c6"></div>
<div style="position:absolute;left:511px;top:203px;width:1px;height:19px;background:#c6c6c6"></div>
<div style="position:absolute;left:593px;top:203px;width:1px;height:19px;background:#c6c6c6"></div>
<div style="position:absolute;left:657px;top:203px;width:1px;height:19px;background:#c6c6c6"></div>
<div style="position:absolute;left:721px;top:203px;width:1px;height:19px;background:#c6c6c6"></div>
<div style="position:absolute;left:785px;top:203px;width:1px;height:19px;background:#c6c6c6"></div>
<div style="position:absolute;left:849px;top:203px;width:1px;height:19px;background:#c6c6c6"></div>
<div style="position:absolute;left:913px;top:203px;width:1px;height:19px;background:#c6c6c6"></div>
<div style="position:absolute;left:977px;top:203px;width:1px;height:19px;background:#c6c6c6"></div>
<div style="position:absolute;left:1041px;top:203px;width:1px;height:19px;background:#c6c6c6"></div>
<div style="position:absolute;left:0px;top:256px;width:25px;height:1px;background:#c6c6c6"></div>
<div style="position:absolute;left:0px;top:276px;width:25px;height:1px;background:#c6c6c6"></div>
<div style="position:absolute;left:0px;top:296px;width:25px;height:1px;background:#c6c6c6"></div>
<div style="position:absolute;left:0px;top:316px;width:25px;height:1px;background:#c6c6c6"></div>
<div style="position:absolute;left:0px;top:336px;width:25px;height:1px;background:#c6c6c6"></div>
<div style="position:absolute;left:0px;top:356px;width:25px;height:1px;background:#c6c6c6"></div>
<div style="position:absolute;left:0px;top:376px;width:25px;height:1px;background:#c6c6c6"></div>
<div style="position:absolute;left:0px;top:396px;width:25px;height:1px;background:#c6c6c6"></div>
<div style="position:absolute;left:0px;top:416px;width:25px;height:1px;background:#c6c6c6"></div>
<div style="position:absolute;left:0px;top:436px;width:25px;height:1px;background:#c6c6c6"></div>
<div style="position:absolute;left:0px;top:456px;width:25px;height:1px;background:#c6c6c6"></div>
<div style="position:absolute;left:0px;top:476px;width:25px;height:1px;background:#c6c6c6"></div>
<div style="position:absolute;left:0px;top:496px;width:25px;height:1px;background:#c6c6c6"></div>
<div style="position:absolute;left:0px;top:516px;width:25px;height:1px;background:#c6c6c6"></div>
<div style="position:absolute;left:0px;top:536px;width:25px;height:1px;background:#c6c6c6"></div>
<div style="position:absolute;left:0px;top:556px;width:25px;height:1px;background:#c6c6c6"></div>
<div style="position:absolute;left:0px;top:576px;width:25px;height:1px;background:#c6c6c6"></div>
<div style="position:absolute;left:0px;top:596px;width:25px;height:1px;background:#c6c6c6"></div>
<div style="position:absolute;left:0px;top:616px;width:25px;height:1px;background:#c6c6c6"></div>
<div style="position:absolute;left:0px;top:636px;width:25px;height:1px;background:#c6c6c6"></div>
<div style="position:absolute;left:0px;top:656px;width:25px;height:1px;background:#c6c6c6"></div>
<div style="position:absolute;left:0px;top:676px;width:25px;height:1px;background:#c6c6c6"></div>
<div style="position:absolute;left:0px;top:222px;width:1067px;height:1px;background:#ababab"></div>
<div style="position:absolute;left:25px;top:222px;width:1px;height:455px;background:#ababab"></div>
<svg style="position:absolute;left:10px;top:207px;" width="13" height="13" viewBox="0 0 13 13"><path d="M12 0 V12 H0 Z" fill="#b7b7b7"/></svg>
<div class="t" style="left:37.50px;top:206.74px;font-size:12px;color:#262626;font-weight:normal;transform-origin:0 0;transform:scaleX(1.0000);">A</div>
<div class="t" style="left:85.50px;top:206.74px;font-size:12px;color:#262626;font-weight:normal;transform-origin:0 0;transform:scaleX(1.0000);">B</div>
<div class="t" style="left:182.17px;top:206.74px;font-size:12px;color:#262626;font-weight:normal;transform-origin:0 0;transform:scaleX(1.0000);">C</div>
<div class="t" style="left:287.17px;top:206.74px;font-size:12px;color:#262626;font-weight:normal;transform-origin:0 0;transform:scaleX(1.0000);">D</div>
<div class="t" style="left:367.00px;top:206.74px;font-size:12px;color:#262626;font-weight:normal;transform-origin:0 0;transform:scaleX(1.0000);">E</div>
<div class="t" style="left:457.33px;top:206.74px;font-size:12px;color:#262626;font-weight:normal;transform-origin:0 0;transform:scaleX(1.0000);">F</div>
<div class="t" style="left:547.83px;top:206.74px;font-size:12px;color:#217346;font-weight:normal;transform-origin:0 0;transform:scaleX(1.0000);">G</div>
<div class="t" style="left:621.17px;top:206.74px;font-size:12px;color:#262626;font-weight:normal;transform-origin:0 0;transform:scaleX(1.0000);">H</div>
<div class="t" style="left:687.83px;top:206.74px;font-size:12px;color:#262626;font-weight:normal;transform-origin:0 0;transform:scaleX(1.0000);">I</div>
<div class="t" style="left:750.50px;top:206.74px;font-size:12px;color:#262626;font-weight:normal;transform-origin:0 0;transform:scaleX(1.0000);">J</div>
<div class="t" style="left:813.50px;top:206.74px;font-size:12px;color:#262626;font-weight:normal;transform-origin:0 0;transform:scaleX(1.0000);">K</div>
<div class="t" style="left:878.16px;top:206.74px;font-size:12px;color:#262626;font-weight:normal;transform-origin:0 0;transform:scaleX(1.0000);">L</div>
<div class="t" style="left:940.50px;top:206.74px;font-size:12px;color:#262626;font-weight:normal;transform-origin:0 0;transform:scaleX(1.0000);">M</div>
<div class="t" style="left:1005.17px;top:206.74px;font-size:12px;color:#262626;font-weight:normal;transform-origin:0 0;transform:scaleX(1.0000);">N</div>
<div class="t" style="left:9.36px;top:241.44px;font-size:12px;color:#262626;font-weight:normal;transform-origin:0 0;transform:scaleX(1.0000);">1</div>
<div class="t" style="left:9.36px;top:261.64px;font-size:12px;color:#217346;font-weight:normal;transform-origin:0 0;transform:scaleX(1.0000);">2</div>
<div class="t" style="left:9.36px;top:281.64px;font-size:12px;color:#217346;font-weight:normal;transform-origin:0 0;transform:scaleX(1.0000);">3</div>
<div class="t" style="left:9.36px;top:301.64px;font-size:12px;color:#217346;font-weight:normal;transform-origin:0 0;transform:scaleX(1.0000);">4</div>
<div class="t" style="left:9.36px;top:321.64px;font-size:12px;color:#217346;font-weight:normal;transform-origin:0 0;transform:scaleX(1.0000);">5</div>
<div class="t" style="left:9.36px;top:341.64px;font-size:12px;color:#217346;font-weight:normal;transform-origin:0 0;transform:scaleX(1.0000);">6</div>
<div class="t" style="left:9.36px;top:361.64px;font-size:12px;color:#217346;font-weight:normal;transform-origin:0 0;transform:scaleX(1.0000);">7</div>
<div class="t" style="left:9.36px;top:381.64px;font-size:12px;color:#217346;font-weight:normal;transform-origin:0 0;transform:scaleX(1.0000);">8</div>
<div class="t" style="left:9.36px;top:401.64px;font-size:12px;color:#217346;font-weight:normal;transform-origin:0 0;transform:scaleX(1.0000);">9</div>
<div class="t" style="left:6.03px;top:421.64px;font-size:12px;color:#217346;font-weight:normal;transform-origin:0 0;transform:scaleX(1.0000);">10</div>
<div class="t" style="left:6.47px;top:441.64px;font-size:12px;color:#217346;font-weight:normal;transform-origin:0 0;transform:scaleX(1.0000);">11</div>
<div class="t" style="left:6.03px;top:461.64px;font-size:12px;color:#262626;font-weight:normal;transform-origin:0 0;transform:scaleX(1.0000);">12</div>
<div class="t" style="left:6.03px;top:481.64px;font-size:12px;color:#262626;font-weight:normal;transform-origin:0 0;transform:scaleX(1.0000);">13</div>
<div class="t" style="left:6.03px;top:501.64px;font-size:12px;color:#262626;font-weight:normal;transform-origin:0 0;transform:scaleX(1.0000);">14</div>
<div class="t" style="left:6.03px;top:521.64px;font-size:12px;color:#262626;font-weight:normal;transform-origin:0 0;transform:scaleX(1.0000);">15</div>
<div class="t" style="left:6.03px;top:541.64px;font-size:12px;color:#262626;font-weight:normal;transform-origin:0 0;transform:scaleX(1.0000);">16</div>
<div class="t" style="left:6.03px;top:561.64px;font-size:12px;color:#262626;font-weight:normal;transform-origin:0 0;transform:scaleX(1.0000);">17</div>
<div class="t" style="left:6.03px;top:581.64px;font-size:12px;color:#262626;font-weight:normal;transform-origin:0 0;transform:scaleX(1.0000);">18</div>
<div class="t" style="left:6.03px;top:601.64px;font-size:12px;color:#262626;font-weight:normal;transform-origin:0 0;transform:scaleX(1.0000);">19</div>
<div class="t" style="left:6.03px;top:621.64px;font-size:12px;color:#262626;font-weight:normal;transform-origin:0 0;transform:scaleX(1.0000);">20</div>
<div class="t" style="left:6.03px;top:641.64px;font-size:12px;color:#262626;font-weight:normal;transform-origin:0 0;transform:scaleX(1.0000);">21</div>
<div class="t" style="left:6.03px;top:661.64px;font-size:12px;color:#262626;font-weight:normal;transform-origin:0 0;transform:scaleX(1.0000);">22</div>
<div style="position:absolute;left:24px;top:257px;width:2px;height:200px;background:#217346"></div>
<div style="position:absolute;left:512px;top:221px;width:81px;height:2px;background:#217346"></div>
<div style="position:absolute;left:26px;top:223px;width:1015px;height:0px;"></div>
<div style="position:absolute;left:26px;top:223px;width:567px;height:33px;background:#ffd966"></div>
<div style="position:absolute;left:512px;top:277px;width:81px;height:179px;background:#c6c6c6"></div>
<div style="position:absolute;left:57px;top:222px;width:1px;height:235px;background:#000"></div>
<div style="position:absolute;left:121px;top:222px;width:1px;height:235px;background:#000"></div>
<div style="position:absolute;left:251px;top:222px;width:1px;height:235px;background:#000"></div>
<div style="position:absolute;left:331px;top:222px;width:1px;height:235px;background:#000"></div>
<div style="position:absolute;left:410px;top:222px;width:1px;height:235px;background:#000"></div>
<div style="position:absolute;left:511px;top:222px;width:1px;height:235px;background:#000"></div>
<div style="position:absolute;left:593px;top:222px;width:1px;height:235px;background:#000"></div>
<div style="position:absolute;left:26px;top:256px;width:568px;height:1px;background:#000"></div>
<div style="position:absolute;left:26px;top:276px;width:568px;height:1px;background:#000"></div>
<div style="position:absolute;left:26px;top:296px;width:568px;height:1px;background:#000"></div>
<div style="position:absolute;left:26px;top:316px;width:568px;height:1px;background:#000"></div>
<div style="position:absolute;left:26px;top:336px;width:568px;height:1px;background:#000"></div>
<div style="position:absolute;left:26px;top:356px;width:568px;height:1px;background:#000"></div>
<div style="position:absolute;left:26px;top:376px;width:568px;height:1px;background:#000"></div>
<div style="position:absolute;left:26px;top:396px;width:568px;height:1px;background:#000"></div>
<div style="position:absolute;left:26px;top:416px;width:568px;height:1px;background:#000"></div>
<div style="position:absolute;left:26px;top:436px;width:568px;height:1px;background:#000"></div>
<div style="position:absolute;left:26px;top:456px;width:568px;height:1px;background:#000"></div>
<div class="t" style="left:29.39px;top:232.87px;font-size:13.5px;color:#000;font-weight:bold;transform-origin:0 0;transform:scaleX(0.9500);">STT</div>
<div class="t" style="left:79.53px;top:232.87px;font-size:13.5px;color:#000;font-weight:bold;transform-origin:0 0;transform:scaleX(0.9500);">MÃ</div>
<div class="t" style="left:152.30px;top:232.87px;font-size:13.5px;color:#000;font-weight:bold;transform-origin:0 0;transform:scaleX(0.9500);">SẢN PHẨM</div>
<div class="t" style="left:255.52px;top:232.87px;font-size:13.5px;color:#000;font-weight:bold;transform-origin:0 0;transform:scaleX(0.9500);">LOẠI HÀNG</div>
<div class="t" style="left:335.63px;top:232.87px;font-size:13.5px;color:#000;font-weight:bold;transform-origin:0 0;transform:scaleX(0.9500);">SỐ LƯỢNG</div>
<div class="t" style="left:425.73px;top:232.87px;font-size:13.5px;color:#000;font-weight:bold;transform-origin:0 0;transform:scaleX(0.9500);">TIỀN HÀNG</div>
<div class="t" style="left:515.81px;top:232.87px;font-size:13.5px;color:#000;font-weight:bold;transform-origin:0 0;transform:scaleX(0.9500);">THUẾ SUẤT</div>
<div class="t" style="left:38.08px;top:259.05px;font-size:14px;color:#000;font-weight:normal;transform-origin:0 0;transform:scaleX(0.8775);">1</div>
<div class="t" style="left:59.80px;top:259.05px;font-size:14px;color:#000;font-weight:normal;transform-origin:0 0;transform:scaleX(0.9018);">VT10001</div>
<div class="t" style="left:123.80px;top:259.05px;font-size:14px;color:#000;font-weight:normal;transform-origin:0 0;transform:scaleX(0.9555);">Đá hộc</div>
<div class="t" style="left:282.95px;top:259.05px;font-size:14px;color:#000;font-weight:normal;transform-origin:0 0;transform:scaleX(0.9546);">Đá</div>
<div class="t" style="left:358.70px;top:259.05px;font-size:14px;color:#000;font-weight:normal;transform-origin:0 0;transform:scaleX(0.8899);">1.054,06</div>
<div class="t" style="left:439.21px;top:259.05px;font-size:14px;color:#000;font-weight:normal;transform-origin:0 0;transform:scaleX(0.8862);">124.570.727</div>
<div class="t" style="left:543.08px;top:259.05px;font-size:14px;color:#000;font-weight:normal;transform-origin:0 0;transform:scaleX(0.9309);">5%</div>
<div class="t" style="left:38.08px;top:279.05px;font-size:14px;color:#000;font-weight:normal;transform-origin:0 0;transform:scaleX(0.8775);">2</div>
<div class="t" style="left:59.80px;top:279.05px;font-size:14px;color:#000;font-weight:normal;transform-origin:0 0;transform:scaleX(0.9018);">VT10002</div>
<div class="t" style="left:123.80px;top:279.05px;font-size:14px;color:#000;font-weight:normal;transform-origin:0 0;transform:scaleX(0.9284);">Đá 0x4</div>
<div class="t" style="left:272.16px;top:279.05px;font-size:14px;color:#000;font-weight:normal;transform-origin:0 0;transform:scaleX(0.9556);">Bột đá</div>
<div class="t" style="left:351.87px;top:279.05px;font-size:14px;color:#000;font-weight:normal;transform-origin:0 0;transform:scaleX(0.8883);">88.220,06</div>
<div class="t" style="left:428.62px;top:279.05px;font-size:14px;color:#000;font-weight:normal;transform-origin:0 0;transform:scaleX(0.8888);">9.154.583.427</div>
<div class="t" style="left:539.67px;top:279.05px;font-size:14px;color:#000;font-weight:normal;transform-origin:0 0;transform:scaleX(0.9161);">10%</div>
<div class="t" style="left:38.08px;top:299.05px;font-size:14px;color:#000;font-weight:normal;transform-origin:0 0;transform:scaleX(0.8775);">3</div>
<div class="t" style="left:59.80px;top:299.05px;font-size:14px;color:#000;font-weight:normal;transform-origin:0 0;transform:scaleX(0.9018);">VT10005</div>
<div class="t" style="left:123.80px;top:299.05px;font-size:14px;color:#000;font-weight:normal;transform-origin:0 0;transform:scaleX(0.9284);">Đá 4x6</div>
<div class="t" style="left:282.95px;top:299.05px;font-size:14px;color:#000;font-weight:normal;transform-origin:0 0;transform:scaleX(0.9546);">Đá</div>
<div class="t" style="left:351.87px;top:299.05px;font-size:14px;color:#000;font-weight:normal;transform-origin:0 0;transform:scaleX(0.8883);">67.254,62</div>
<div class="t" style="left:422.71px;top:299.05px;font-size:14px;color:#000;font-weight:normal;transform-origin:0 0;transform:scaleX(0.8879);">10.108.538.112</div>
<div class="t" style="left:543.08px;top:299.05px;font-size:14px;color:#000;font-weight:normal;transform-origin:0 0;transform:scaleX(0.9309);">5%</div>
<div class="t" style="left:38.08px;top:319.05px;font-size:14px;color:#000;font-weight:normal;transform-origin:0 0;transform:scaleX(0.8775);">4</div>
<div class="t" style="left:59.80px;top:319.05px;font-size:14px;color:#000;font-weight:normal;transform-origin:0 0;transform:scaleX(0.9018);">VT10006</div>
<div class="t" style="left:123.80px;top:319.05px;font-size:14px;color:#000;font-weight:normal;transform-origin:0 0;transform:scaleX(0.9365);">Đá 5x20 ly tâm</div>
<div class="t" style="left:282.95px;top:319.05px;font-size:14px;color:#000;font-weight:normal;transform-origin:0 0;transform:scaleX(0.9546);">Đá</div>
<div class="t" style="left:369.28px;top:319.05px;font-size:14px;color:#000;font-weight:normal;transform-origin:0 0;transform:scaleX(0.8854);">142,97</div>
<div class="t" style="left:446.04px;top:319.05px;font-size:14px;color:#000;font-weight:normal;transform-origin:0 0;transform:scaleX(0.8871);">32.493.181</div>
<div class="t" style="left:543.08px;top:319.05px;font-size:14px;color:#000;font-weight:normal;transform-origin:0 0;transform:scaleX(0.9309);">5%</div>
<div class="t" style="left:38.08px;top:339.05px;font-size:14px;color:#000;font-weight:normal;transform-origin:0 0;transform:scaleX(0.8775);">5</div>
<div class="t" style="left:59.80px;top:339.05px;font-size:14px;color:#000;font-weight:normal;transform-origin:0 0;transform:scaleX(0.9018);">VT10007</div>
<div class="t" style="left:123.80px;top:339.05px;font-size:14px;color:#000;font-weight:normal;transform-origin:0 0;transform:scaleX(0.9559);">Đá mi bụi</div>
<div class="t" style="left:272.16px;top:339.05px;font-size:14px;color:#000;font-weight:normal;transform-origin:0 0;transform:scaleX(0.9556);">Bột đá</div>
<div class="t" style="left:351.87px;top:339.05px;font-size:14px;color:#000;font-weight:normal;transform-origin:0 0;transform:scaleX(0.8883);">49.951,39</div>
<div class="t" style="left:428.62px;top:339.05px;font-size:14px;color:#000;font-weight:normal;transform-origin:0 0;transform:scaleX(0.8888);">5.036.227.924</div>
<div class="t" style="left:539.67px;top:339.05px;font-size:14px;color:#000;font-weight:normal;transform-origin:0 0;transform:scaleX(0.9161);">10%</div>
<div class="t" style="left:38.08px;top:359.05px;font-size:14px;color:#000;font-weight:normal;transform-origin:0 0;transform:scaleX(0.8775);">6</div>
<div class="t" style="left:59.80px;top:359.05px;font-size:14px;color:#000;font-weight:normal;transform-origin:0 0;transform:scaleX(0.9018);">VT10008</div>
<div class="t" style="left:123.80px;top:359.05px;font-size:14px;color:#000;font-weight:normal;transform-origin:0 0;transform:scaleX(0.9557);">Đá mi sàng</div>
<div class="t" style="left:272.16px;top:359.05px;font-size:14px;color:#000;font-weight:normal;transform-origin:0 0;transform:scaleX(0.9556);">Bột đá</div>
<div class="t" style="left:358.70px;top:359.05px;font-size:14px;color:#000;font-weight:normal;transform-origin:0 0;transform:scaleX(0.8899);">5.806,60</div>
<div class="t" style="left:439.21px;top:359.05px;font-size:14px;color:#000;font-weight:normal;transform-origin:0 0;transform:scaleX(0.8862);">824.366.694</div>
<div class="t" style="left:539.67px;top:359.05px;font-size:14px;color:#000;font-weight:normal;transform-origin:0 0;transform:scaleX(0.9161);">10%</div>
<div class="t" style="left:38.08px;top:379.05px;font-size:14px;color:#000;font-weight:normal;transform-origin:0 0;transform:scaleX(0.8775);">7</div>
<div class="t" style="left:59.80px;top:379.05px;font-size:14px;color:#000;font-weight:normal;transform-origin:0 0;transform:scaleX(0.9018);">VT10015</div>
<div class="t" style="left:123.80px;top:379.05px;font-size:14px;color:#000;font-weight:normal;transform-origin:0 0;transform:scaleX(0.9558);">Đá vệ sinh</div>
<div class="t" style="left:282.95px;top:379.05px;font-size:14px;color:#000;font-weight:normal;transform-origin:0 0;transform:scaleX(0.9546);">Đá</div>
<div class="t" style="left:358.70px;top:379.05px;font-size:14px;color:#000;font-weight:normal;transform-origin:0 0;transform:scaleX(0.8899);">1.360,60</div>
<div class="t" style="left:446.04px;top:379.05px;font-size:14px;color:#000;font-weight:normal;transform-origin:0 0;transform:scaleX(0.8871);">86.583.639</div>
<div class="t" style="left:543.08px;top:379.05px;font-size:14px;color:#000;font-weight:normal;transform-origin:0 0;transform:scaleX(0.9309);">5%</div>
<div class="t" style="left:38.08px;top:399.05px;font-size:14px;color:#000;font-weight:normal;transform-origin:0 0;transform:scaleX(0.8775);">8</div>
<div class="t" style="left:59.80px;top:399.05px;font-size:14px;color:#000;font-weight:normal;transform-origin:0 0;transform:scaleX(0.9018);">VT10373</div>
<div class="t" style="left:123.80px;top:399.05px;font-size:14px;color:#000;font-weight:normal;transform-origin:0 0;transform:scaleX(0.9284);">Đá 2x4</div>
<div class="t" style="left:282.95px;top:399.05px;font-size:14px;color:#000;font-weight:normal;transform-origin:0 0;transform:scaleX(0.9546);">Đá</div>
<div class="t" style="left:376.13px;top:399.05px;font-size:14px;color:#000;font-weight:normal;transform-origin:0 0;transform:scaleX(0.8871);">41,72</div>
<div class="t" style="left:452.87px;top:399.05px;font-size:14px;color:#000;font-weight:normal;transform-origin:0 0;transform:scaleX(0.8883);">7.206.182</div>
<div class="t" style="left:543.08px;top:399.05px;font-size:14px;color:#000;font-weight:normal;transform-origin:0 0;transform:scaleX(0.9309);">5%</div>
<div class="t" style="left:38.08px;top:419.05px;font-size:14px;color:#000;font-weight:normal;transform-origin:0 0;transform:scaleX(0.8775);">9</div>
<div class="t" style="left:59.80px;top:419.05px;font-size:14px;color:#000;font-weight:normal;transform-origin:0 0;transform:scaleX(0.9018);">VT10376</div>
<div class="t" style="left:123.80px;top:419.05px;font-size:14px;color:#000;font-weight:normal;transform-origin:0 0;transform:scaleX(0.9557);">Đất san lấp</div>
<div class="t" style="left:281.10px;top:419.05px;font-size:14px;color:#000;font-weight:normal;transform-origin:0 0;transform:scaleX(0.9546);">Đất</div>
<div class="t" style="left:351.87px;top:419.05px;font-size:14px;color:#000;font-weight:normal;transform-origin:0 0;transform:scaleX(0.8883);">21.069,80</div>
<div class="t" style="left:439.21px;top:419.05px;font-size:14px;color:#000;font-weight:normal;transform-origin:0 0;transform:scaleX(0.8862);">599.214.839</div>
<div class="t" style="left:543.08px;top:419.05px;font-size:14px;color:#000;font-weight:normal;transform-origin:0 0;transform:scaleX(0.9309);">0%</div>
<div class="t" style="left:34.67px;top:439.05px;font-size:14px;color:#000;font-weight:normal;transform-origin:0 0;transform:scaleX(0.8775);">10</div>
<div class="t" style="left:59.80px;top:439.05px;font-size:14px;color:#000;font-weight:normal;transform-origin:0 0;transform:scaleX(0.9018);">VT10377</div>
<div class="t" style="left:123.80px;top:439.05px;font-size:14px;color:#000;font-weight:normal;transform-origin:0 0;transform:scaleX(0.9208);">Đá 0x25</div>
<div class="t" style="left:272.16px;top:439.05px;font-size:14px;color:#000;font-weight:normal;transform-origin:0 0;transform:scaleX(0.9556);">Bột đá</div>
<div class="t" style="left:377.04px;top:439.05px;font-size:14px;color:#000;font-weight:normal;transform-origin:0 0;transform:scaleX(0.8871);">11,10</div>
<div class="t" style="left:452.87px;top:439.05px;font-size:14px;color:#000;font-weight:normal;transform-origin:0 0;transform:scaleX(0.8883);">1.412.727</div>
<div class="t" style="left:539.67px;top:439.05px;font-size:14px;color:#000;font-weight:normal;transform-origin:0 0;transform:scaleX(0.9161);">10%</div>
<div style="position:absolute;left:510px;top:255px;width:85px;height:2px;background:#217346"></div>
<div style="position:absolute;left:510px;top:456px;width:85px;height:2px;background:#217346"></div>
<div style="position:absolute;left:510px;top:255px;width:2px;height:203px;background:#217346"></div>
<div style="position:absolute;left:593px;top:255px;width:2px;height:203px;background:#217346"></div>
<div style="position:absolute;left:512px;top:257px;width:1px;height:199px;background:#fff"></div>
<div style="position:absolute;left:592px;top:257px;width:1px;height:199px;background:#fff"></div>
<div style="position:absolute;left:512px;top:455px;width:81px;height:1px;background:#fff"></div>
<div style="position:absolute;left:590px;top:453px;width:7px;height:7px;background:#fff"></div>
<div style="position:absolute;left:591px;top:454px;width:5px;height:5px;background:#217346"></div>
</body></html>
